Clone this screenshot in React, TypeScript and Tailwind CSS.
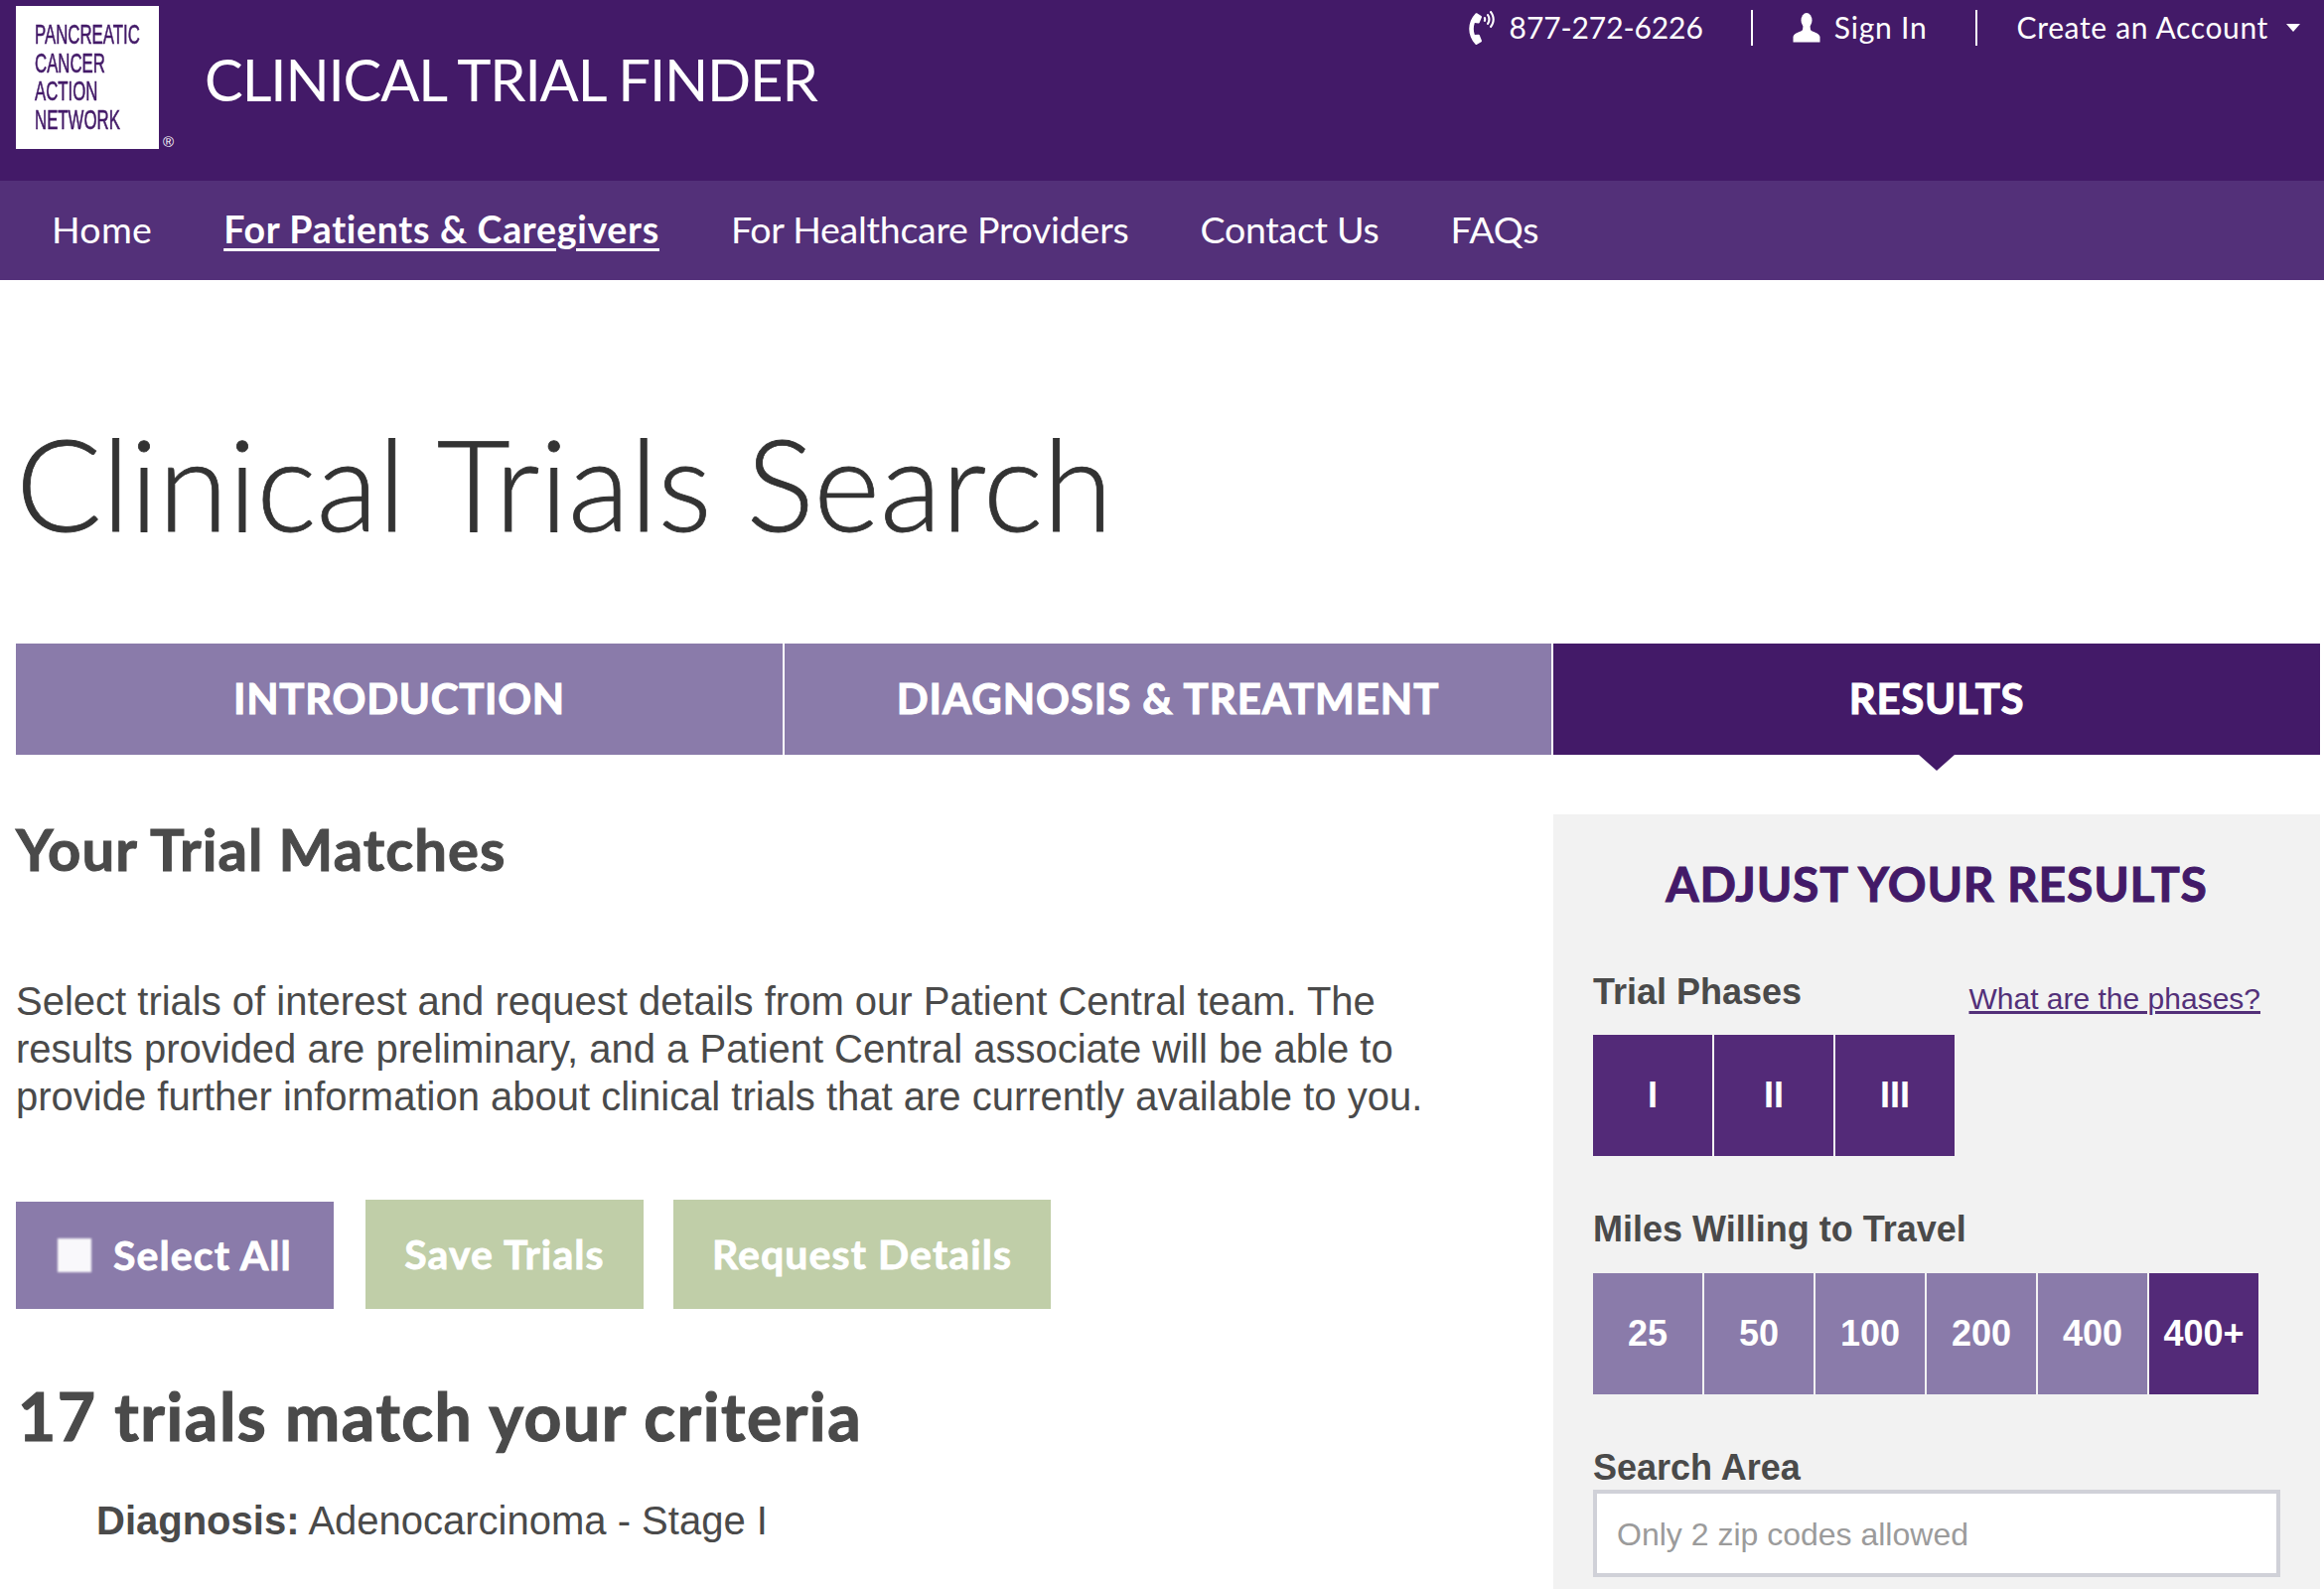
import React from "react";
import { FaPhoneVolume } from "react-icons/fa";

const avenir = "font-['Lato','Noto_Sans',sans-serif]";
const arial = "font-['Liberation_Sans',Arial,sans-serif]";

function UserGlyph() {
  return (
    <svg viewBox="0 0 28 30" className="h-[30px] w-[28px] fill-white">
      <ellipse cx="14" cy="7.500" rx="5.500" ry="7.500" />
      <path d="M10.500 13h7l.5 4c1 2 9 3 9.500 7v5.500H.5V24c.5-4 8.500-5 9.500-7z" />
    </svg>
  );
}

const phases = ["I", "II", "III"];
const miles = ["25", "50", "100", "200", "400", "400+"];

export default function App() {
  return (
    <div className={`h-[1600px] w-[2340px] overflow-hidden bg-white text-[#4a4a4a] ${avenir}`}>
      <header className="relative flex h-[182px] bg-[#431a68] pl-4 text-white">
        <div className="mt-[6px] h-[144px] w-[144px] overflow-hidden bg-white pl-[19px] pt-[15px]">
          <div className={`origin-top-left scale-x-[0.6] whitespace-nowrap text-[28px] leading-[28.700px] text-[#431a68] [-webkit-text-stroke:0.6px] ${arial}`}>
            PANCREATIC<br />CANCER<br />ACTION<br />NETWORK
          </div>
        </div>
        <span className={`mt-[135px] ml-[4px] text-[15px] leading-[16px] ${arial}`}>®</span>
        <h1 className="ml-[31px] mt-[43px] text-[58px] font-normal leading-[74px] tracking-[-1.150px]">CLINICAL TRIAL FINDER</h1>
        <div className="absolute right-[24px] top-[10px] flex h-[36px] items-center text-[30px]">
          <FaPhoneVolume className="h-[34px] w-[34px]" />
          <span className="-mt-[2px] ml-[11px] tracking-[-0.100px]">877-272-6226</span>
          <span className="ml-[48px] h-[36px] w-[2px] bg-white" />
          <span className="ml-[40px]"><UserGlyph /></span>
          <span className="-mt-[2px] ml-[14px] tracking-[0.800px]">Sign In</span>
          <span className="ml-[48px] h-[36px] w-[2px] bg-white" />
          <span className="-mt-[2px] ml-[40px] tracking-[0.650px]">Create an Account</span>
          <span className="ml-[18px] h-0 w-0 border-x-[7.500px] border-t-[8px] border-x-transparent border-t-white" />
        </div>
      </header>
      <nav className="flex h-[100px] items-center gap-[72px] bg-[#533079] pb-[2px] pl-[52px] text-[37.500px] tracking-[-0.250px] text-white">
        <a className="tracking-[0.300px]">Home</a>
        <a className="font-bold tracking-[0.700px] underline underline-offset-[5px]">For Patients &amp; Caregivers</a>
        <a>For Healthcare Providers</a>
        <a>Contact Us</a>
        <a>FAQs</a>
      </nav>
      <main className="pl-4 pr-1">
        <h2 className="mt-[129px] text-[128px] font-light leading-[150px] text-[#333] [-webkit-text-stroke:0.8px]">Clinical Trials Search</h2>
        <div className="mt-[87px] grid grid-cols-3 gap-[2px] text-[42px] font-bold tracking-[0.700px] text-white [-webkit-text-stroke:1px]">
          <div className="flex h-[112px] items-center justify-center bg-[#8a7baa] pb-[2px]">INTRODUCTION</div>
          <div className="flex h-[112px] items-center justify-center bg-[#8a7baa] pb-[2px] tracking-[0.950px]">DIAGNOSIS &amp; TREATMENT</div>
          <div className="relative flex h-[112px] items-center justify-center bg-[#431a68] pb-[2px]">
            RESULTS
            <span className="absolute left-1/2 top-full h-0 w-0 -translate-x-1/2 border-x-[18px] border-t-[16px] border-x-transparent border-t-[#431a68]" />
          </div>
        </div>
        <div className="flex">
          <section className="w-[1548px] flex-none">
            <h3 className="mt-[61px] text-[58px] font-bold leading-[68px] tracking-[1.050px] [-webkit-text-stroke:1px]">Your Trial Matches</h3>
            <p className={`mt-[95px] w-[1450px] text-[40px] leading-[48px] ${arial}`}>
              Select trials of interest and request details from our Patient Central team. The results provided are preliminary, and a Patient Central associate will be able to provide further information about clinical trials that are currently available to you.
            </p>
            <div className="mt-[80px] flex h-[110px] items-end text-[41px] font-bold tracking-[1.100px] text-white [-webkit-text-stroke:0.8px]">
              <div className="flex h-[108px] w-[320px] items-center bg-[#8a7baa] pl-[42px]">
                <span className="h-[34px] w-[34px] bg-white/95 blur-[1px]" />
                <span className="ml-[22px]">Select All</span>
              </div>
              <div className="ml-[32px] flex h-[110px] w-[280px] items-center justify-center bg-[#c0cea8]">Save Trials</div>
              <div className="ml-[30px] flex h-[110px] w-[380px] items-center justify-center bg-[#c0cea8]">Request Details</div>
            </div>
            <h3 className="mt-[64px] ml-[2px] text-[66px] font-bold leading-[88px] tracking-[1.550px] [-webkit-text-stroke:1.200px]">17 trials match your criteria</h3>
            <p className={`mt-[35px] ml-[81px] text-[40px] leading-[52px] ${arial}`}><b>Diagnosis:</b> Adenocarcinoma - Stage I</p>
          </section>
          <aside className={`mt-[60px] h-[800px] flex-1 bg-[#f2f2f2] ${arial}`}>
            <h3 className={`pt-[40px] text-center text-[48px] font-bold leading-[60px] tracking-[0.800px] text-[#431a68] [-webkit-text-stroke:1px] ${avenir}`}>ADJUST YOUR RESULTS</h3>
            <div className="pl-[40px]">
              <div className="mt-[56px] flex h-[46px] items-center justify-between pr-[60px]">
                <span className="text-[36px] font-bold leading-[46px]">Trial Phases</span>
                <a className="mt-[14px] text-[30px] leading-[40px] text-[#533079] underline">What are the phases?</a>
              </div>
              <div className="mt-[20px] flex gap-[2px]">
                {phases.map((p) => (
                  <div key={p} className="flex h-[122px] w-[120px] items-center justify-center bg-[#532a78] text-[36px] font-bold text-white">{p}</div>
                ))}
              </div>
              <div className="mt-[50px] h-[46px] text-[36px] font-bold leading-[48px]">Miles Willing to Travel</div>
              <div className="mt-[22px] flex gap-[2px]">
                {miles.map((m, i) => (
                  <div key={m} className={`flex h-[122px] w-[110px] items-center justify-center text-[36px] font-bold text-white ${i === 5 ? "bg-[#532a78]" : "bg-[#8a7baa]"}`}>{m}</div>
                ))}
              </div>
              <div className="mt-[50px] h-[46px] text-[36px] font-bold leading-[48px]">Search Area</div>
              <div className="flex h-[88px] w-[692px] items-center border-4 border-[#d0d1d8] bg-white pl-[20px] pt-[2px] text-[32px] text-[#9b9b9b]">Only 2 zip codes allowed</div>
            </div>
          </aside>
        </div>
      </main>
    </div>
  );
}
